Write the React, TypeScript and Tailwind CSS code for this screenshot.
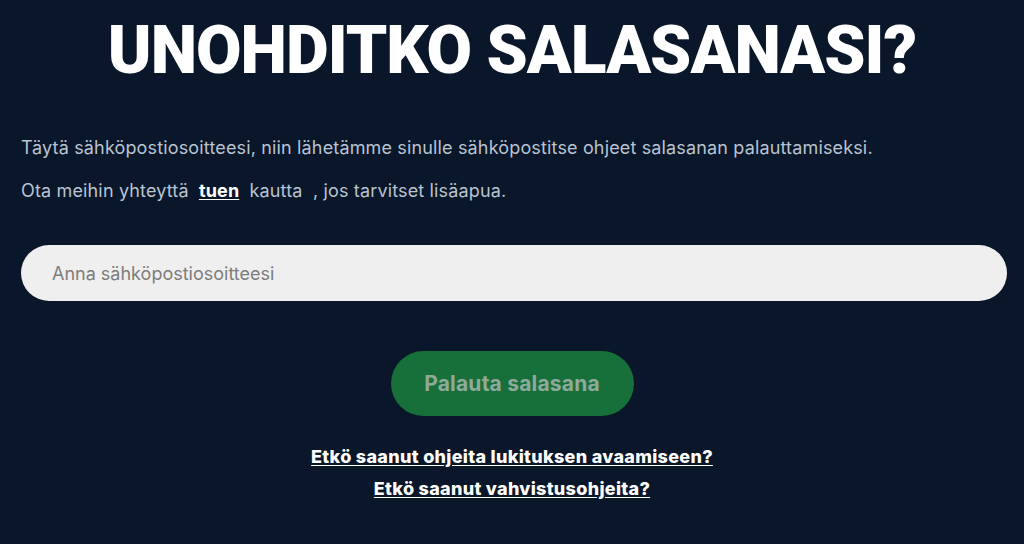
import React from 'react';

export default function App() {
  return (
    <div className="min-h-[544px] bg-[#0a1629] font-['Inter',sans-serif] text-[#b9c3d1]">
      <div className="px-[21px] pt-[20px]">
        <h1 className="text-center font-['Roboto',sans-serif] text-[66px] leading-[62px] font-black tracking-[-1px] text-white">
          UNOHDITKO SALASANASI?
        </h1>

        <p className="mt-[55px] text-[18px] leading-[22px] tracking-[0.15px]">
          Täytä sähköpostiosoitteesi, niin lähetämme sinulle sähköpostitse ohjeet salasanan palauttamiseksi.
        </p>
        <p className="mt-[21px] text-[18px] leading-[22px] tracking-[0.15px]">
          Ota meihin yhteyttä{' '}
          <a href="#" className="mx-[5px] font-bold text-white underline underline-offset-2">
            tuen
          </a>
          {' '}kautta&nbsp; , jos tarvitset lisäapua.
        </p>

        <input
          type="email"
          placeholder="Anna sähköpostiosoitteesi"
          className="mt-[43px] block h-[56px] w-[986px] rounded-full bg-[#efefef] px-[31px] text-[18px] text-gray-800 placeholder:text-[#7d7d7d] outline-none"
        />

        <div className="mt-[50px] flex justify-center">
          <button className="h-[65px] w-[243px] rounded-full bg-[#17703a] text-[21px] font-bold tracking-[0.2px] text-[#8fa99b]">
            Palauta salasana
          </button>
        </div>

        <div className="mt-[30px] flex flex-col items-center gap-[10px] text-[18px] leading-[22px] font-extrabold tracking-[0.3px] text-white">
          <a href="#" className="underline underline-offset-2">
            Etkö saanut ohjeita lukituksen avaamiseen?
          </a>
          <a href="#" className="underline underline-offset-2">
            Etkö saanut vahvistusohjeita?
          </a>
        </div>
      </div>
    </div>
  );
}
